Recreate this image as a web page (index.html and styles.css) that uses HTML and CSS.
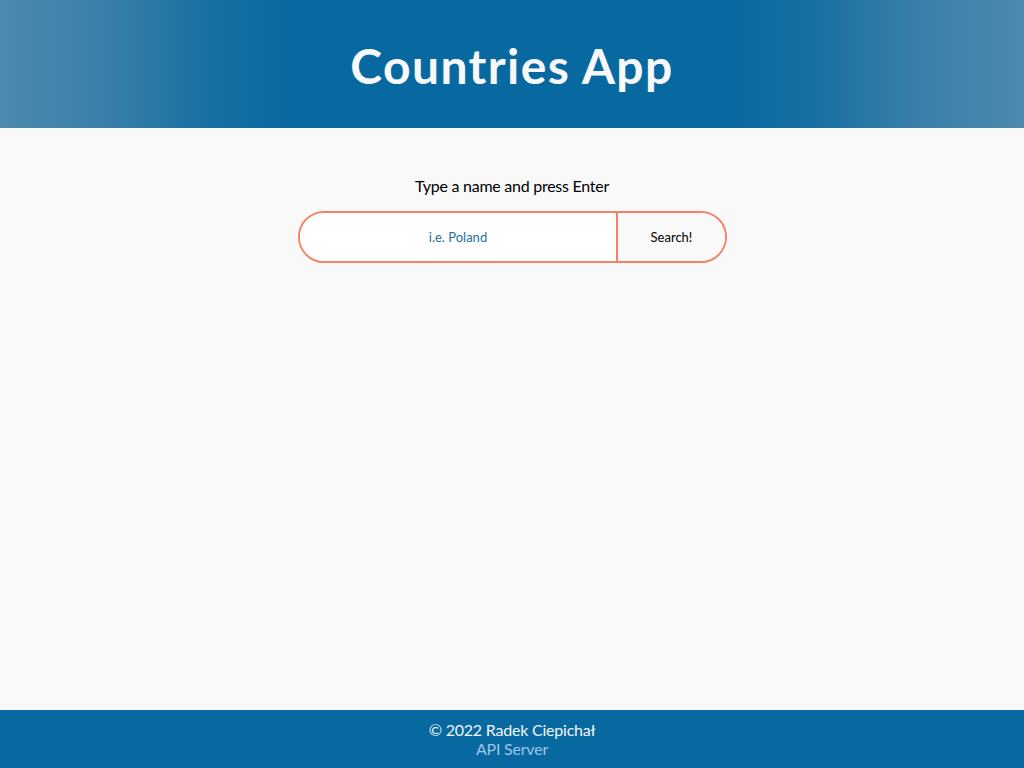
FILE: index.html
```html
<!DOCTYPE html>
<html lang="en">
<head>
<meta charset="utf-8">
<title>Countries App</title>
<link rel="stylesheet" href="styles.css">
</head>
<body>
<div class="page">
  <header class="header">
    <h1 class="title">Countries App</h1>
  </header>
  <main class="main">
    <p class="hint">Type a name and press Enter</p>
    <form class="search">
      <input class="search-input" type="text" placeholder="i.e. Poland">
      <button class="search-btn" type="button">Search!</button>
    </form>
  </main>
  <footer class="footer">
    <div class="copy">© 2022 Radek Ciepichał</div>
    <a class="link" href="#">API Server</a>
  </footer>
</div>
</body>
</html>
```
FILE: styles.css
```css
* { box-sizing: border-box; }
html, body { margin: 0; padding: 0; }
body {
  font-family: Lato, "Open Sans", sans-serif;
  background: #f9f9f9;
  color: #000;
}
.page {
  min-height: 768px;
  display: flex;
  flex-direction: column;
}
.header {
  height: 128px;
  display: flex;
  align-items: center;
  justify-content: center;
  background: linear-gradient(90deg, #4d8aae 0%, #3a80aa 10%, #1a70a3 20%, #0868a0 29%, #0868a0 71%, #1a70a3 80%, #3a80aa 90%, #4d8aae 100%);
}
.title {
  margin: 0;
  color: #f7f8fa;
  font-size: 48px;
  font-weight: 700;
  letter-spacing: 1.4px;
  line-height: 1;
  position: relative;
  top: 2px;
}
.main {
  flex: 1;
  display: flex;
  flex-direction: column;
  align-items: center;
  padding-top: 48px;
}
.hint {
  margin: 0 0 15px;
  font-size: 16px;
  line-height: 20px;
  letter-spacing: -0.26px;
  color: #000;
}
.search {
  display: flex;
  width: 429px;
  height: 52px;
  border: 2px solid #f98067;
  border-radius: 26px;
  overflow: hidden;
  margin: 0 0 0 1px;
}
.search-input {
  flex: 1;
  border: none;
  outline: none;
  background: #fff;
  text-align: center;
  font-family: Lato, sans-serif;
  font-size: 13px;
  color: #0868a0;
  padding: 0;
}
.search-input::placeholder { color: #1c6fa3; opacity: 1; }
.search-btn {
  width: 109px;
  border: none;
  border-left: 2px solid #f98067;
  background: #f9f9f9;
  font-family: Lato, sans-serif;
  font-size: 13px;
  color: #000;
  cursor: pointer;
}
.footer {
  height: 58px;
  background: #0868a0;
  display: flex;
  flex-direction: column;
  align-items: center;
  justify-content: center;
  font-size: 16px;
  line-height: 19px;
  letter-spacing: -0.22px;
}
.copy { color: #f2f6f9; }
.link { color: #9cc6e6; text-decoration: none; }
```
